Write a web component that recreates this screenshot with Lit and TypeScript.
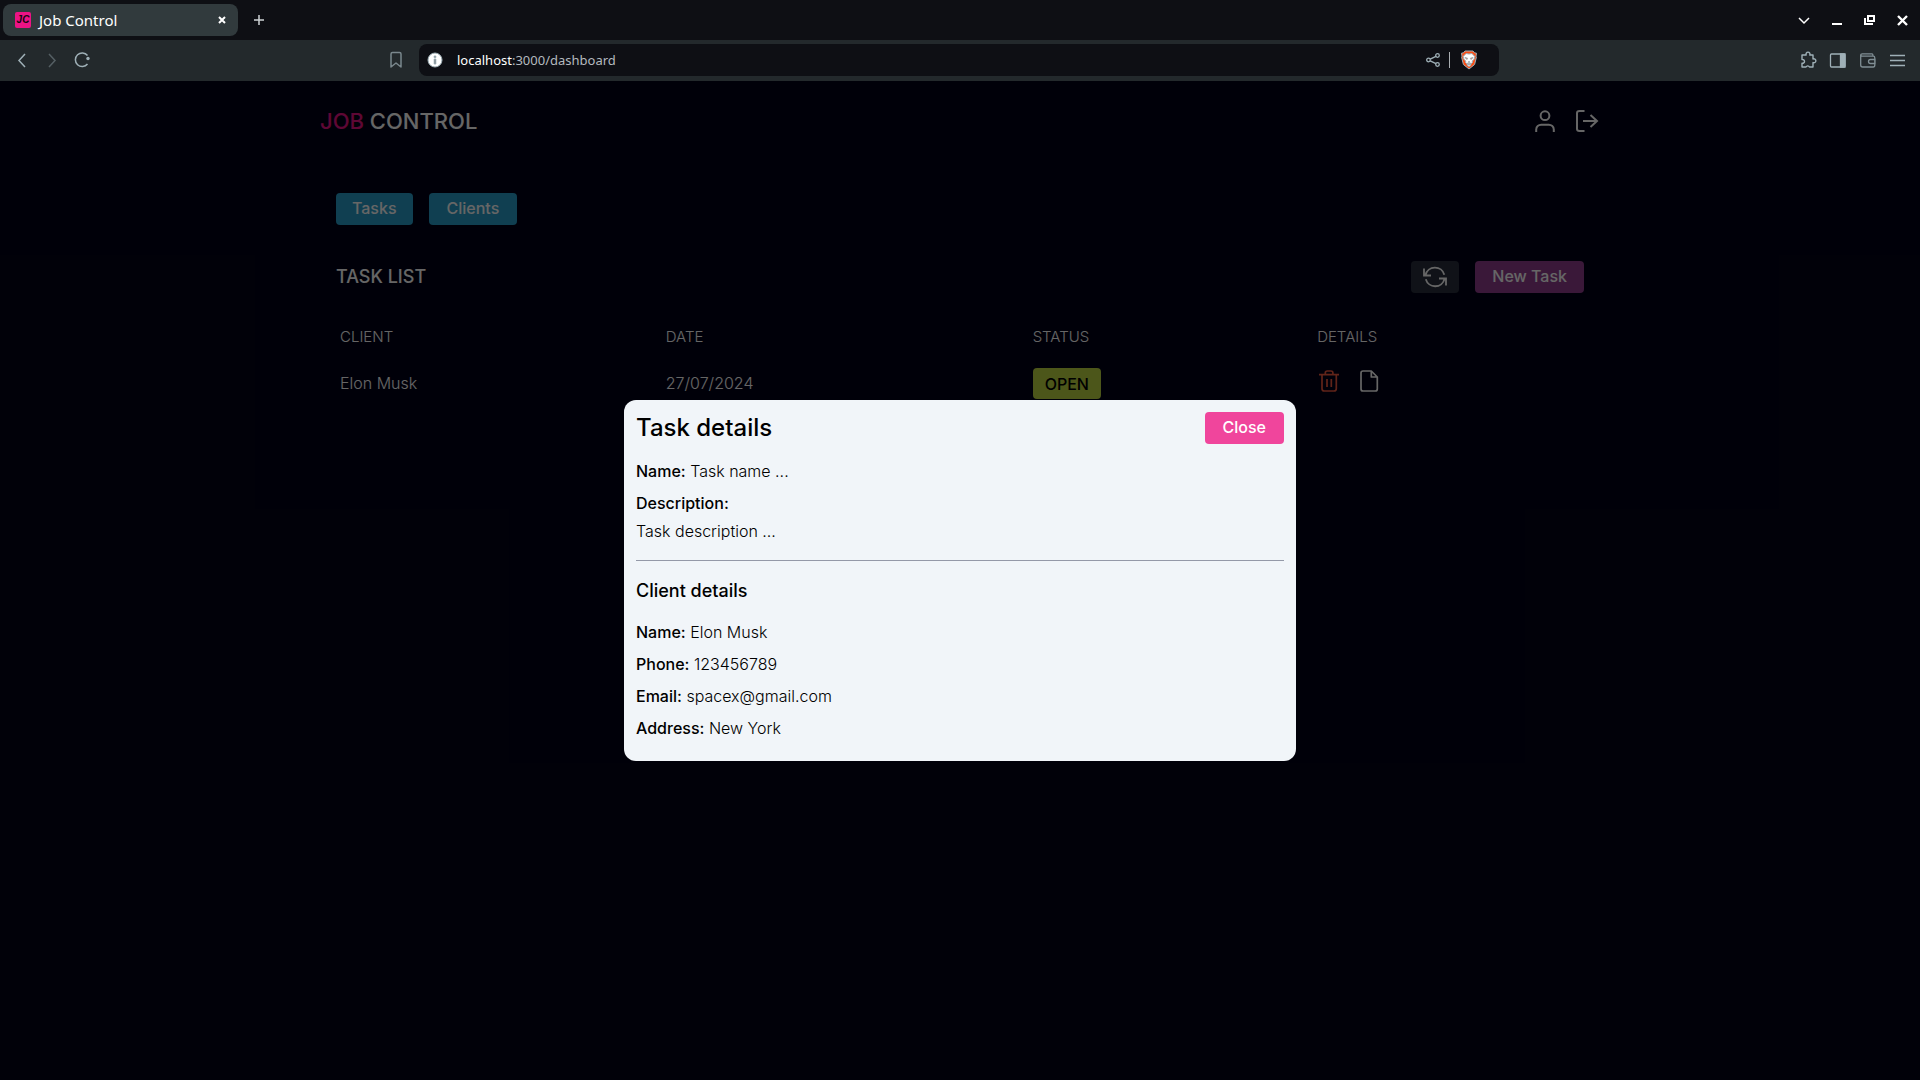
import { LitElement, html, svg, css } from "lit";
import { customElement } from "lit/decorators.js";

const stroked = css`
  svg {
    display: block;
    fill: none;
    stroke: currentColor;
  }
  button {
    font: inherit;
    color: inherit;
    background: none;
    border: 0;
    padding: 0;
    margin: 0;
    cursor: pointer;
  }
`;

@customElement("browser-bar")
class BrowserBar extends LitElement {
  static styles = [
    stroked,
    css`
      :host {
        display: block;
        font-family: "Noto Sans", "Open Sans", sans-serif;
        color: #fff;
      }
      .tabs {
        display: flex;
        align-items: center;
        height: 40px;
        padding: 0 8px 0 3px;
        background: #0e0f14;
      }
      .tab {
        display: flex;
        align-items: center;
        gap: 8px;
        box-sizing: border-box;
        width: 235px;
        height: 32px;
        padding: 0 12px;
        border-radius: 8px;
        background: #313a3d;
        font-size: 15px;
        line-height: 20px;
      }
      .favicon {
        width: 16px;
        height: 16px;
        border-radius: 2px;
        background: #ec1385;
        color: #14060e;
        font: italic 700 10px/16px "Liberation Sans", sans-serif;
        text-align: center;
      }
      .title {
        flex: 1;
      }
      .plus {
        margin-left: 11px;
        color: #ced3d5;
      }
      .window {
        display: flex;
        gap: 15px;
        margin-left: auto;
      }
      .bar {
        display: flex;
        align-items: center;
        box-sizing: border-box;
        height: 41px;
        padding: 0 12px 1px 10px;
        background: #23292c;
        color: #9fb0b7;
      }
      .side {
        display: flex;
        align-items: center;
        flex: 1;
        gap: 10px;
      }
      .side .mark {
        margin-left: auto;
        margin-right: 16px;
        opacity: 0.7;
      }
      .side .dim {
        opacity: 0.4;
      }
      .end {
        justify-content: flex-end;
      }
      .address {
        display: flex;
        align-items: center;
        flex: 0 1 1064px;
        height: 32px;
        padding: 0 8px;
        border-radius: 8px;
        background: #0e0f14;
      }
      .url {
        flex: 1;
        margin-left: 14px;
        font-size: 13px;
        line-height: 20px;
        color: #b4babf;
      }
      .url b {
        font-weight: 400;
        color: #fff;
      }
      .divider {
        width: 1px;
        height: 16px;
        margin: 0 10px 0 8px;
        background: #a9adb1;
      }
      .shield {
        margin-right: 13px;
      }
    `,
  ];

  render() {
    return html`
      <div class="tabs">
        <div class="tab">
          <span class="favicon">JC</span>
          <span class="title">Job Control</span>
          <button aria-label="Close tab">
            <svg width="8" height="8" stroke-width="2"><path d="M1 1l6 6M7 1l-6 6" /></svg>
          </button>
        </div>
        <button class="plus" aria-label="New tab">
          <svg width="20" height="20" stroke-width="1.5"><path d="M10 5v10M5 10h10" /></svg>
        </button>
        <div class="window">
          <button aria-label="Search tabs">
            <svg width="18" height="18" stroke="#a9bcc2" stroke-width="1.5"><path d="M4 7l5 5 5-5" /></svg>
          </button>
          <button aria-label="Minimize">
            <svg width="18" height="18" stroke-width="2"><path d="M4 13h10" /></svg>
          </button>
          <button aria-label="Restore">
            <svg width="18" height="18" stroke-width="2">
              <path d="M7 5h6v5H7z" /><path d="M4 7v6h8" />
            </svg>
          </button>
          <button aria-label="Close window">
            <svg width="18" height="18" stroke-width="2.4"><path d="M4 5l9 9M13 5l-9 9" /></svg>
          </button>
        </div>
      </div>
      <div class="bar">
        <div class="side">
          <button aria-label="Back">
            <svg width="20" height="20" stroke-width="1.5"><path d="M15 4L9 10.500l6 6.500" /></svg>
          </button>
          <button class="dim" aria-label="Forward">
            <svg width="20" height="20" stroke-width="1.5"><path d="M9 4l6 6.500-6 6.500" /></svg>
          </button>
          <button aria-label="Reload">
            <svg width="24" height="20" stroke-width="1.5">
              <path d="M17.500 14a6.800 6.800 0 1 1 0-8.500" />
              <circle cx="18" cy="8.500" r="1.700" fill="currentColor" stroke="none" />
            </svg>
          </button>
          <button class="mark" aria-label="Bookmark">
            <svg width="14" height="18" stroke-width="1.5">
              <path d="M2 3q0-1.500 1.500-1.500h7Q12 1.500 12 3v13l-5-4-5 4z" stroke-linejoin="round" />
            </svg>
          </button>
        </div>
        <div class="address">
          <svg width="16" height="16" stroke="none">
            <circle cx="8" cy="8" r="7" fill="#fff" />
            <path d="M7.200 4h1.600v1.600H7.200zM7.200 7h1.600v5H7.200z" fill="#4a4d50" />
          </svg>
          <span class="url"><b>localhost</b>:3000/dashboard</span>
          <svg width="16" height="16" stroke="#b4b8bb" stroke-width="1.3">
            <circle cx="3.500" cy="8" r="1.800" /><circle cx="12.500" cy="3.500" r="1.800" />
            <circle cx="12.500" cy="12.500" r="1.800" /><path d="M5.200 7.200l5.700-2.900M5.200 8.800l5.700 2.900" />
          </svg>
          <span class="divider"></span>
          <svg class="shield" width="18" height="20" stroke="none">
            <path d="M5 1h8l1.500 1.800 2 .4-.5 3 .4 1-1.800 7.300L9 19l-5.600-4.500L1.600 7.200l.4-1-.5-3 2-.4z" fill="#fb4d14" />
            <path
              d="M6 3.500L9 4l3-.5 2.800 3-.8 3-1.800 1.500.3 1.500L10.600 14 11 15l-2 1.500L7 15l.4-1-1.900-1.500.3-1.500L4 9.500l-.8-3z"
              fill="#fff"
            />
            <path d="M5 7.500l2.700.8-.8 1.200zM13 7.500l-2.700.8.8 1.200zM8.500 11.500h1L9 13zM7.300 13l1.700 1 1.700-1-.2.800L9 15l-1.500-1.200z" fill="#fb4d14" />
          </svg>
        </div>
        <div class="side end">
          <button aria-label="Extensions">
            <svg width="20" height="20" stroke-width="1.4">
              <path
                stroke-linejoin="round"
                d="M4 5h4.200a2 2 0 1 1 3.600 0H15v4a2 2 0 1 1 0 3.600V17h-3.500a1.900 1.900 0 0 0-3.500 0H4v-3.800a1.900 1.900 0 1 0 0-3.600z"
              />
            </svg>
          </button>
          <button aria-label="Side panel">
            <svg width="20" height="20" stroke-width="1.3">
              <rect x="2.500" y="4" width="14.500" height="13" rx="1" /><path d="M12.500 4H17v13h-4.500z" fill="currentColor" />
            </svg>
          </button>
          <button aria-label="Wallet">
            <svg width="20" height="20" stroke-width="1.3" opacity=".75">
              <path
                d="M2.700 5v10q0 2 2 2h10.500q1.600 0 1.600-2V8q0-1.800-1.600-1.800H4Q2.700 6 2.700 5q0-1.200 1.500-1.200H14q1 0 1 2.400M17 9.500h-4.500a2 2 0 0 0 0 4H17z"
              />
            </svg>
          </button>
          <button aria-label="Menu">
            <svg width="20" height="20" stroke-width="1.3"><path d="M2 5.500h15M2 10.500h15M2 15.500h15" /></svg>
          </button>
        </div>
      </div>
    `;
  }
}

const userIcon = svg`<svg width="28" height="28" stroke-width="2">
  <circle cx="13" cy="8.700" r="4.400" />
  <path d="M4.200 25v-2.500a5 5 0 0 1 5-4.800h7.600a5 5 0 0 1 5 4.800V25" /></svg>`;

const logoutIcon = svg`<svg width="28" height="28" stroke-width="2">
  <path d="M12.500 4h-5Q5 4 5 6v16q0 2 2.500 2h5M11 14h14M18.500 8l6.500 6-6.500 6" /></svg>`;

const refreshIcon = svg`<svg width="24" height="24" stroke-width="1.800">
  <path d="M1 3.500v7h7M2.500 10A9.700 9.700 0 0 1 21.300 9.700M23 20.500v-7h-7M21.500 14A9.700 9.700 0 0 1 2.800 14.300" /></svg>`;

const trashIcon = svg`<svg width="24" height="24" stroke-width="1.700">
  <path d="M2 5.700h20M8.300 5.500V4q0-2 2-2h3.600q2 0 2 2v1.500M5 6v13.500Q5 22 7.300 22h9.700q2.300 0 2.300-2.500V6M10 10v8M14.300 10v8" /></svg>`;

const fileIcon = svg`<svg width="24" height="24" stroke-width="1.700">
  <path d="M14.300 2H6Q4 2 4 4v16q0 2 2 2h12.300q2 0 2-2V8zM14.300 2v6h6" stroke-linejoin="round" /></svg>`;

@customElement("task-modal")
class TaskModal extends LitElement {
  static styles = [
    stroked,
    css`
      :host {
        display: flex;
        align-items: center;
        justify-content: center;
        background: rgba(0, 0, 0, 0.6);
      }
      .card {
        box-sizing: border-box;
        width: 100%;
        max-width: 672px;
        padding: 12px 12px 21px;
        border-radius: 12px;
        background: #f1f5f9;
        color: #000;
        font-weight: 300;
      }
      .head {
        display: flex;
        align-items: center;
        justify-content: space-between;
        margin-bottom: 15px;
      }
      h2,
      h3,
      p {
        margin: 0;
      }
      h2 {
        font-size: 24px;
        line-height: 32px;
        font-weight: 500;
      }
      h3 {
        margin: 16px 0 15px;
        font-size: 18px;
        line-height: 28px;
        font-weight: 500;
      }
      p {
        margin-bottom: 8px;
      }
      p.label {
        margin-bottom: 4px;
      }
      p:last-child {
        margin-bottom: 0;
      }
      b {
        font-weight: 500;
      }
      hr {
        height: 1px;
        margin: 17px 0 0;
        border: 0;
        background: #9499a8;
      }
      .close {
        padding: 3px 18px 5px;
        border-radius: 4px;
        background: #f0459c;
        color: #fff;
        font-weight: 500;
      }
    `,
  ];

  client = [
    ["Name", "Elon Musk"],
    ["Phone", "123456789"],
    ["Email", "spacex@gmail.com"],
    ["Address", "New York"],
  ];

  render() {
    return html`
      <section class="card" role="dialog" aria-labelledby="heading">
        <div class="head">
          <h2 id="heading">Task details</h2>
          <button class="close">Close</button>
        </div>
        <p><b>Name:</b> Task name ...</p>
        <p class="label"><b>Description:</b></p>
        <p>Task description ...</p>
        <hr />
        <h3>Client details</h3>
        ${this.client.map(([label, value]) => html`<p><b>${label}:</b> ${value}</p>`)}
      </section>
    `;
  }
}

@customElement("app-root")
class AppRoot extends LitElement {
  static styles = [
    stroked,
    css`
      :host {
        display: flex;
        flex-direction: column;
        min-height: 100vh;
        font-family: Inter, "Open Sans", sans-serif;
        font-size: 16px;
        line-height: 24px;
      }
      .page {
        position: relative;
        flex: 1;
        background: #020217;
        color: #fff;
      }
      task-modal {
        position: absolute;
        inset: 0;
      }
      .container {
        max-width: 1280px;
        margin: 0 auto;
      }
      header {
        display: flex;
        align-items: center;
        justify-content: space-between;
        height: 80px;
      }
      h1,
      h2 {
        margin: 0;
        font-weight: 500;
      }
      h1 {
        font-size: 22px;
        line-height: 32px;
      }
      h1 span {
        color: #ec1385;
      }
      .icons {
        display: flex;
        gap: 12px;
      }
      main {
        padding: 32px 16px;
      }
      nav,
      .actions,
      .row-actions {
        display: flex;
        gap: 16px;
      }
      .btn {
        padding: 3px 16px 5px;
        border-radius: 4px;
        font-weight: 500;
      }
      .cyan {
        background: #289dca;
      }
      .cyan + .cyan {
        padding-inline: 18px;
      }
      .purple {
        padding-inline: 17px;
        background: #913e8e;
      }
      .slate {
        padding: 4px 12px;
        background: #282f3e;
      }
      .heading {
        display: flex;
        align-items: center;
        justify-content: space-between;
        margin: 36px 0 28px;
      }
      h2 {
        font-size: 18px;
        line-height: 28px;
      }
      table {
        width: 100%;
        table-layout: fixed;
        border-collapse: collapse;
        text-align: left;
        font-weight: 300;
      }
      th,
      td {
        box-sizing: border-box;
      }
      th {
        padding: 4px;
        font-size: 15px;
        font-weight: 300;
      }
      td {
        height: 50px;
        padding: 10px 4px 0;
      }
      .client {
        width: 26.1%;
      }
      .date {
        width: 29.4%;
      }
      .status {
        width: 22.8%;
      }
      .badge {
        display: inline-block;
        padding: 4px 12px 3px;
        border-radius: 4px;
        background: #bed741;
        color: #000;
        font-weight: 500;
      }
      .row-actions .trash {
        color: #f05a40;
      }
      .row-actions {
        padding-bottom: 4px;
      }
    `,
  ];

  render() {
    return html`
      <browser-bar></browser-bar>
      <div class="page">
        <div class="container">
          <header>
            <h1><span>JOB</span> CONTROL</h1>
            <div class="icons">
              <button aria-label="Profile">${userIcon}</button>
              <button aria-label="Log out">${logoutIcon}</button>
            </div>
          </header>
          <main>
            <nav>
              <button class="btn cyan">Tasks</button>
              <button class="btn cyan">Clients</button>
            </nav>
            <div class="heading">
              <h2>TASK LIST</h2>
              <div class="actions">
                <button class="btn slate" aria-label="Refresh">${refreshIcon}</button>
                <button class="btn purple">New Task</button>
              </div>
            </div>
            <table>
              <thead>
                <tr>
                  <th class="client">CLIENT</th>
                  <th class="date">DATE</th>
                  <th class="status">STATUS</th>
                  <th>DETAILS</th>
                </tr>
              </thead>
              <tbody>
                <tr>
                  <td>Elon Musk</td>
                  <td>27/07/2024</td>
                  <td><span class="badge">OPEN</span></td>
                  <td>
                    <div class="row-actions">
                      <button class="trash" aria-label="Delete task">${trashIcon}</button>
                      <button aria-label="Show details">${fileIcon}</button>
                    </div>
                  </td>
                </tr>
              </tbody>
            </table>
          </main>
        </div>
        <task-modal></task-modal>
      </div>
    `;
  }
}
